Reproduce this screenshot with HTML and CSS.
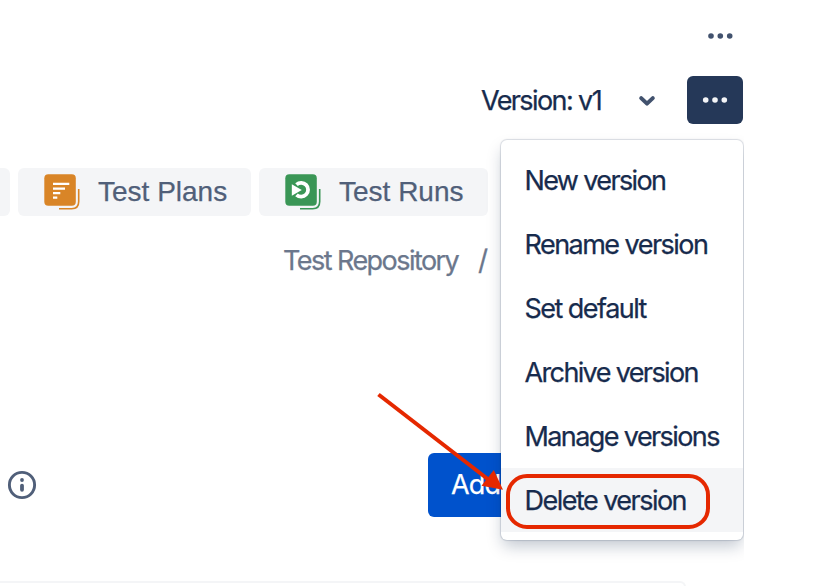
FILE: index.html
```html
<!DOCTYPE html>
<html lang="en">
<head>
<meta charset="utf-8">
<title>Test case versions</title>
<link rel="stylesheet" href="styles.css">
</head>
<body>
<main class="page">
  <div class="topbar">
    <svg class="dots" width="26" height="8" viewBox="0 0 26 8"><circle cx="4" cy="4" r="2.8"/><circle cx="13.3" cy="4" r="2.8"/><circle cx="22.7" cy="4" r="2.8"/></svg>
  </div>
  <div class="version-row">
    <span class="version-label">Version: v1</span>
    <svg class="chevron" width="20" height="14" viewBox="0 0 20 14"><path d="M4.2 5.100L10 10.600l5.800-5.500"/></svg>
    <div class="more">
      <button class="more-button" aria-label="More">
        <svg class="dots" width="26" height="8" viewBox="0 0 26 8"><circle cx="3.700" cy="4" r="2.8"/><circle cx="13" cy="4" r="2.8"/><circle cx="22.300" cy="4" r="2.8"/></svg>
      </button>
      <div class="menu">
        <div class="item w-new">New version</div>
        <div class="item">Rename version</div>
        <div class="item">Set default</div>
        <div class="item w-archive">Archive version</div>
        <div class="item w-manage">Manage versions</div>
        <div class="item active">Delete version</div>
      </div>
    </div>
  </div>
  <nav class="tabs">
    <div class="tab stub"></div>
    <div class="tab plans">
      <svg width="38" height="38" viewBox="0 0 38 38"><rect x="1.300" y="1.200" width="31.500" height="31.500" rx="4" fill="#d98527"/><path d="M35.700 16v12.500q0 7.200-7 7.200H16" fill="none" stroke="#d98527" stroke-width="1.600"/><path d="M10 10.900h16.300M10 15.600h12M10 20.100h7.300M10 24.600h4.300" stroke="#fff" stroke-width="2.300" fill="none"/></svg>
      <span>Test Plans</span>
    </div>
    <div class="tab runs">
      <svg width="38" height="38" viewBox="0 0 38 38"><rect x="1.300" y="1.200" width="31.500" height="31.500" rx="4" fill="#3a9656"/><path d="M35.700 16v12.500q0 7.200-7 7.200H16" fill="none" stroke="#3a9656" stroke-width="1.600"/><path d="M12.500 11.600A6.900 6.900 0 1 1 12.500 21.800" stroke="#fff" stroke-width="3.800" fill="none"/><path d="M7.800 11.200L17.800 17 7.800 22.800z" fill="#fff"/></svg>
      <span>Test Runs</span>
    </div>
  </nav>
  <div class="crumbs"><span class="repo">Test Repository</span><span class="slash">/</span></div>
  <div class="actions">
    <svg width="30" height="30" viewBox="0 0 30 30"><circle cx="15" cy="15" r="12.600" fill="none" stroke="#505f79" stroke-width="2.900"/><circle cx="15" cy="10" r="1.900" fill="#505f79"/><path d="M15 15.600v4.200" stroke="#505f79" stroke-width="3.800" stroke-linecap="round"/></svg>
    <button class="add">Add</button>
  </div>
  <section class="panel"></section>
  <svg class="note" width="824" height="586" viewBox="0 0 824 586"><path d="M378.500 394.500L489 480" stroke="#e52800" stroke-width="4"/><path d="M503 489.700L493.800 470 481.500 485.800z" fill="#e52800"/><rect x="508" y="476" width="200" height="51" rx="19" fill="none" stroke="#e52800" stroke-width="4"/></svg>
</main>
</body>
</html>
```
FILE: styles.css
```css
* { box-sizing: border-box; }
body { margin: 0; background: #fff; }
.page {
  position: relative;
  width: 744px;
  height: 586px;
  overflow: hidden;
  display: flex;
  flex-direction: column;
  font-family: Inter, "Liberation Sans", sans-serif;
  font-size: 27px;
  color: #172b4d;
  -webkit-text-stroke: .25px currentColor;
}
.page > * { flex: none; }
.page svg { flex: none; display: block; }
.topbar { height: 76px; padding: 32px 11px 0 0; display: flex; justify-content: flex-end; }
.dots { fill: #42526e; }
.version-row { height: 48px; display: flex; align-items: center; justify-content: flex-end; padding-right: 1px; }
.version-label { width: 156px; letter-spacing: -1.600px; white-space: nowrap; }
.chevron { margin-right: 30px; fill: none; stroke: #42526e; stroke-width: 4; stroke-linecap: round; stroke-linejoin: round; }
.more { position: relative; }
.more-button { display: flex; align-items: center; justify-content: center; width: 56px; height: 48px; padding: 0; border: 0; border-radius: 6px; background: #253858; }
.more-button .dots { fill: #f4f5f7; }
.menu {
  position: absolute;
  z-index: 2;
  top: 64px;
  right: 0;
  width: 242px;
  height: 400px;
  padding: 8px 0;
  background: #fff;
  border-radius: 6px;
  box-shadow: 0 0 1px 1px rgba(9, 30, 66, .14), 0 8px 16px -2px rgba(9, 30, 66, .25);
}
.item { height: 64px; padding-left: 23.500px; line-height: 65px; letter-spacing: -1.530px; white-space: nowrap; }
.w-new, .w-archive { letter-spacing: -1.630px; }
.w-manage { letter-spacing: -1.600px; }
.active { background: #f4f5f7; }
.tabs { display: flex; gap: 8px; margin-top: 44px; height: 48px; }
.tab { display: flex; align-items: center; border-radius: 6px; background: #f4f5f7; color: #505f79; font: 28px "Liberation Sans", sans-serif; white-space: nowrap; }
.tab svg { margin: 0 17px 0 25px; }
.stub { width: 10px; border-radius: 0 6px 6px 0; }
.plans { width: 233px; }
.runs { width: 229px; }
.crumbs { display: flex; align-items: center; margin: 23px 0 0 283px; height: 42px; color: #6b778c; }
.repo { width: 195px; letter-spacing: -1.550px; white-space: nowrap; }
.slash { font-size: 28px; }
.actions { display: flex; align-items: center; justify-content: space-between; height: 64px; margin: 172px 183px 0 7px; }
.add { width: 133px; height: 64px; padding: 0 0 2px 23px; border: 0; border-radius: 6px; background: #0052cc; color: #fff; font: inherit; letter-spacing: -.8px; text-align: left; }
.panel { width: 686px; height: 12px; margin-top: 64px; border: solid #f4f5f7; border-width: 2px 2px 0 0; border-radius: 0 6px 0 0; }
.note { position: absolute; z-index: 3; top: 0; left: 0; }
```
